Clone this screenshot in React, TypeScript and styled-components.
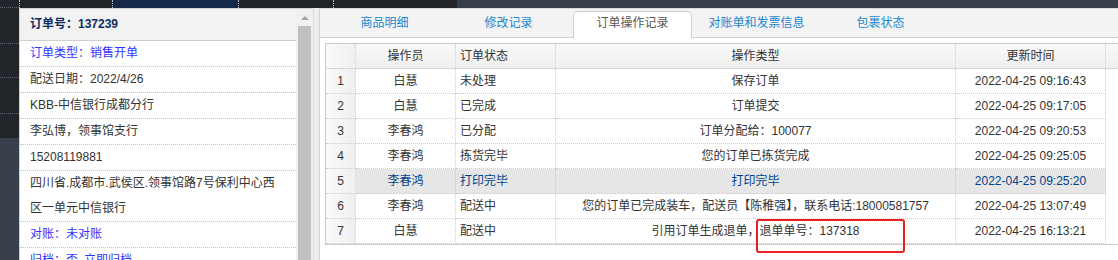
import React from "react";
import styled, { createGlobalStyle } from "styled-components";

const GlobalStyle = createGlobalStyle`
  html, body {
    margin: 0;
    padding: 0;
    background: #363f4a;
  }
  body {
    font-family: "Liberation Sans", "Noto Sans CJK SC", sans-serif;
    font-size: 12px;
    color: #333;
  }
  * {
    box-sizing: border-box;
  }
`;

const Page = styled.div`
  position: relative;
  display: flex;
  width: 1118px;
  height: 260px;
  overflow: hidden;
`;

/* left dark rail */
const Rail = styled.div`
  width: 19px;
  flex: none;
  display: flex;
  flex-direction: column;
  background: #363f4a;
`;
const RailItem = styled.div<{ $h: number; $line?: boolean }>`
  height: ${(p) => p.$h}px;
  flex: none;
  background: #212429;
  border-bottom: ${(p) => (p.$line ? "1px dotted #5c636e" : "none")};
`;

const Main = styled.div`
  flex: 1;
  display: flex;
  flex-direction: column;
  min-width: 0;
`;

/* top nav strip */
const TopStrip = styled.div`
  height: 8px;
  flex: none;
  display: flex;
  background: #363f4a;
`;
const StripSeg = styled.div<{ $w: number; $navy?: boolean }>`
  width: ${(p) => p.$w}px;
  flex: none;
  background: ${(p) => (p.$navy ? "#14284a" : "#212429")};
  border-left: 1px dotted #b9bec6;
`;

const Body = styled.div`
  flex: 1;
  display: flex;
  min-height: 0;
`;

/* left info panel */
const InfoPanel = styled.div`
  width: 277px;
  flex: none;
  background: #fff;
  border-left: 1px solid #d3d3d3;
  border-top: 1px solid #d3d3d3;
  overflow: hidden;
`;
const InfoHeader = styled.div`
  height: 32px;
  line-height: 31px;
  padding: 0 10px;
  background: #f2f2f2;
  border-bottom: 1px solid #cfcfcf;
  font-weight: bold;
  color: #0e2d5f;
`;
const InfoRow = styled.div<{ $blue?: boolean }>`
  line-height: 25px;
  padding: 0 14px 0 10px;
  border-bottom: 1px dotted #c4c4c4;
  color: ${(p) => (p.$blue ? "#3333ff" : "#333")};
`;
const InfoLink = styled.span`
  margin-left: 6px;
`;

const Scrollbar = styled.div`
  width: 17px;
  flex: none;
  display: flex;
  flex-direction: column;
  align-items: center;
  background: #f1f1f1;
  border-top: 1px solid #d3d3d3;
`;
const ScrollArrow = styled.div`
  height: 17px;
  flex: none;
  display: flex;
  align-items: center;
  justify-content: center;
  &::before {
    content: "";
    border-left: 4px solid transparent;
    border-right: 4px solid transparent;
    border-bottom: 4px solid #a3a3a3;
  }
`;
const ScrollThumb = styled.div`
  width: 13px;
  flex: 1;
  background: #c1c1c1;
`;

const Splitter = styled.div`
  width: 6px;
  flex: none;
  background: #eeeeee;
  border-left: 1px solid #dcdcdc;
`;

/* right tabs panel */
const TabsPanel = styled.div`
  flex: 1;
  min-width: 0;
  display: flex;
  flex-direction: column;
  background: #fff;
  border-left: 1px solid #d3d3d3;
`;
const TabBar = styled.div`
  height: 30px;
  flex: none;
  display: flex;
  align-items: flex-end;
  gap: 5px;
  padding-left: 5px;
  background: #f3f3f3;
  border-top: 1px solid #d8d8d8;
  border-bottom: 1px solid #d3d3d3;
`;
const Tab = styled.div<{ $active?: boolean }>`
  width: 119px;
  height: 27px;
  flex: none;
  margin-bottom: -1px;
  line-height: 23px;
  text-align: center;
  color: ${(p) => (p.$active ? "#575757" : "#1b87cf")};
  background: ${(p) => (p.$active ? "#fff" : "transparent")};
  border: 1px solid ${(p) => (p.$active ? "#d0d0d0" : "transparent")};
  border-bottom: none;
  border-radius: 5px 5px 0 0;
`;

const TabBody = styled.div`
  flex: 1;
  padding: 5px 0 0 5px;
`;

const Grid = styled.div`
  border: 1px solid #cccccc;
  border-right: none;
`;
const HeadRow = styled.div`
  display: grid;
  grid-template-columns: 30px 100px 100px 400px 150px 1fr;
  height: 25px;
  background: linear-gradient(to bottom, #f9f9f9 0, #efefef 100%);
  border-bottom: 1px solid #d6d6d6;
`;
const DataRow = styled.div<{ $over?: boolean }>`
  display: grid;
  grid-template-columns: 30px 100px 100px 400px 150px;
  width: 780px;
  height: 25px;
  background: ${(p) => (p.$over ? "#e6e6e6" : "#fff")};
  color: ${(p) => (p.$over ? "#00438a" : "#333")};
`;
const Cell = styled.div<{ $align?: "left" | "center"; $num?: boolean; $head?: boolean }>`
  line-height: 24px;
  padding: 0 4px;
  white-space: nowrap;
  overflow: hidden;
  text-align: ${(p) => p.$align || "center"};
  border-right: 1px dotted #cccccc;
  border-bottom: ${(p) => (p.$head ? "none" : "1px dotted #cccccc")};
  background: ${(p) =>
    p.$num ? "linear-gradient(to right, #fafafa 0, #efefef 100%)" : "transparent"};
  color: ${(p) => (p.$num ? "#333" : "inherit")};
`;
const HeadFill = styled.div``;

const Mark = styled.div`
  position: absolute;
  left: 756px;
  top: 219px;
  width: 149px;
  height: 34px;
  border: 2px solid #ea1f22;
  border-radius: 3px;
  pointer-events: none;
`;

const tabs = ["商品明细", "修改记录", "订单操作记录", "对账单和发票信息", "包裹状态"];

const logs = [
  { user: "白慧", state: "未处理", action: "保存订单", time: "2022-04-25 09:16:43" },
  { user: "白慧", state: "已完成", action: "订单提交", time: "2022-04-25 09:17:05" },
  { user: "李春鸿", state: "已分配", action: "订单分配给：100077", time: "2022-04-25 09:20:53" },
  { user: "李春鸿", state: "拣货完毕", action: "您的订单已拣货完成", time: "2022-04-25 09:25:05" },
  { user: "李春鸿", state: "打印完毕", action: "打印完毕", time: "2022-04-25 09:25:20" },
  {
    user: "李春鸿",
    state: "配送中",
    action: "您的订单已完成装车，配送员【陈稚强】，联系电话:18000581757",
    time: "2022-04-25 13:07:49",
  },
  { user: "白慧", state: "配送中", action: "引用订单生成退单，退单单号：137318", time: "2022-04-25 16:13:21" },
];

const App = () => {
  return (
    <>
      <GlobalStyle />
      <Page>
        <Rail>
          <RailItem $h={8} $line />
          <RailItem $h={36} $line />
          <RailItem $h={34} $line />
          <RailItem $h={36} $line />
          <RailItem $h={24} />
        </Rail>
        <Main>
          <TopStrip>
            <StripSeg $w={93} />
            <StripSeg $w={126} $navy />
            <StripSeg $w={95} />
            <StripSeg $w={124} />
          </TopStrip>
          <Body>
            <InfoPanel>
              <InfoHeader>订单号：137239</InfoHeader>
              <InfoRow $blue>订单类型：销售开单</InfoRow>
              <InfoRow>配送日期：2022/4/26</InfoRow>
              <InfoRow>KBB-中信银行成都分行</InfoRow>
              <InfoRow>李弘博，领事馆支行</InfoRow>
              <InfoRow>15208119881</InfoRow>
              <InfoRow>四川省.成都市.武侯区.领事馆路7号保利中心西区一单元中信银行</InfoRow>
              <InfoRow $blue>对账：未对账</InfoRow>
              <InfoRow $blue>
                归档：否<InfoLink>立即归档</InfoLink>
              </InfoRow>
            </InfoPanel>
            <Scrollbar>
              <ScrollArrow />
              <ScrollThumb />
            </Scrollbar>
            <Splitter />
            <TabsPanel>
              <TabBar>
                {tabs.map((t) => (
                  <Tab key={t} $active={t === "订单操作记录"}>
                    {t}
                  </Tab>
                ))}
              </TabBar>
              <TabBody>
                <Grid>
                  <HeadRow>
                    <Cell $head $num />
                    <Cell $head>操作员</Cell>
                    <Cell $head $align="left">订单状态</Cell>
                    <Cell $head>操作类型</Cell>
                    <Cell $head>更新时间</Cell>
                    <HeadFill />
                  </HeadRow>
                  {logs.map((v, i) => (
                    <DataRow key={i} $over={i === 4}>
                      <Cell $num>{i + 1}</Cell>
                      <Cell>{v.user}</Cell>
                      <Cell $align="left">{v.state}</Cell>
                      <Cell>{v.action}</Cell>
                      <Cell>{v.time}</Cell>
                    </DataRow>
                  ))}
                </Grid>
              </TabBody>
            </TabsPanel>
          </Body>
        </Main>
        <Mark />
      </Page>
    </>
  );
};

export default App;
